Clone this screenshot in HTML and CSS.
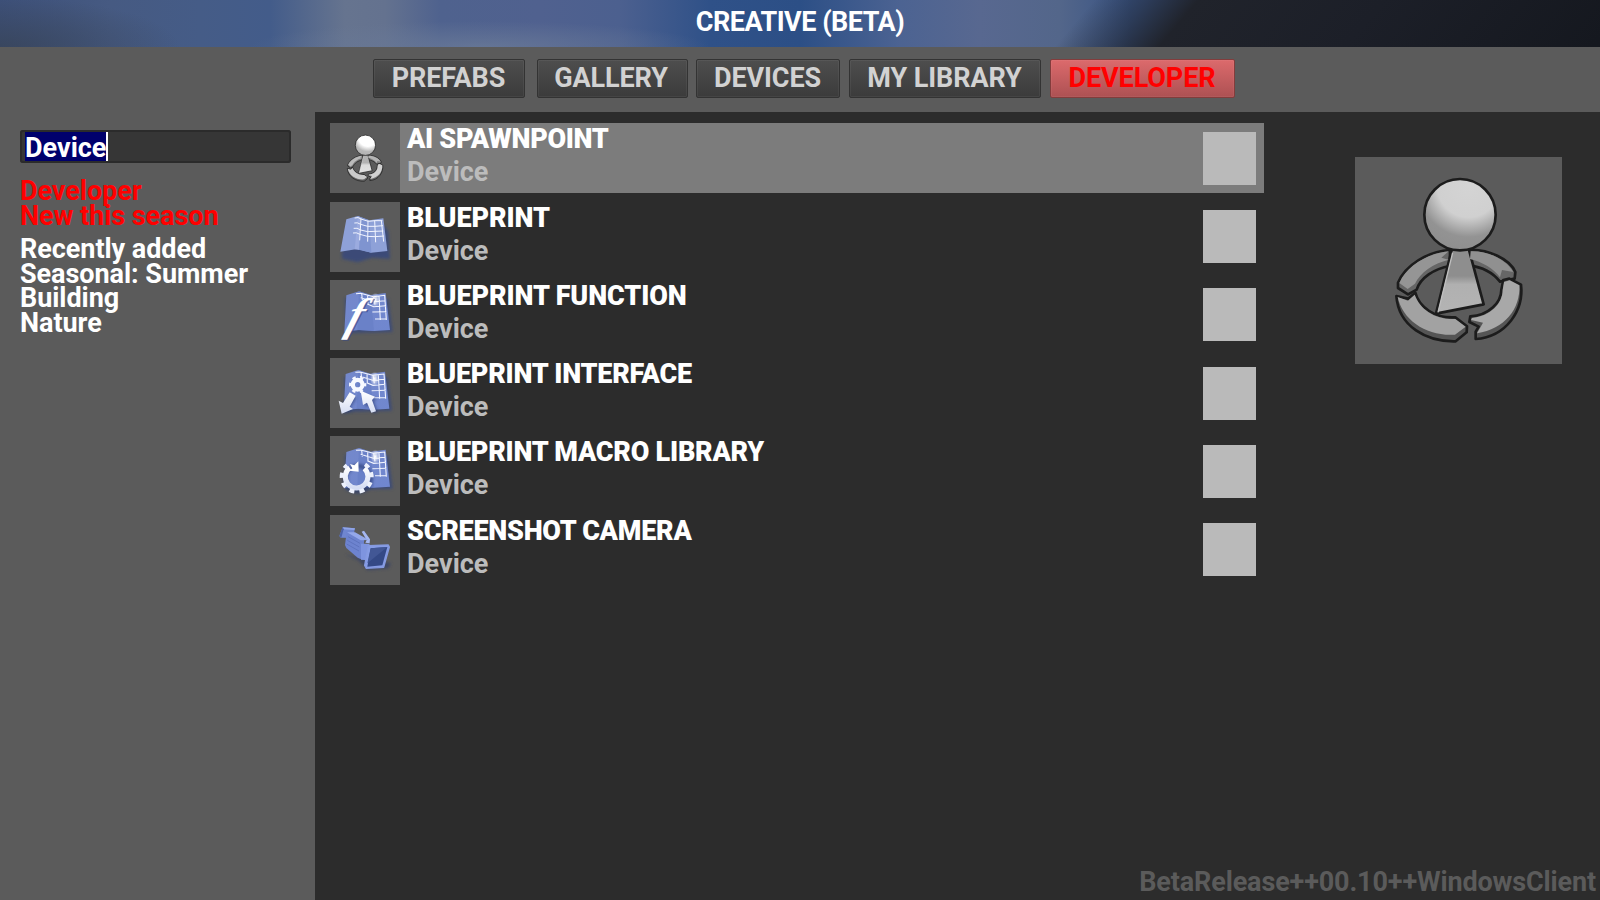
FILE: index.html
```html
<!DOCTYPE html>
<html lang="en">
<head>
<meta charset="utf-8">
<title>Creative (Beta)</title>
<link rel="stylesheet" href="styles.css">
</head>
<body>
<svg class="defs" width="0" height="0" aria-hidden="true">
  <defs>
    <radialGradient id="head" cx="0.62" cy="0.1" r="0.95">
      <stop offset="0" stop-color="#d4d4d4"/><stop offset="0.46" stop-color="#d0d0d0"/><stop offset="0.75" stop-color="#939393"/><stop offset="1" stop-color="#8e8e8e"/>
    </radialGradient>
    <linearGradient id="body" x1="0" y1="0" x2="0" y2="1">
      <stop offset="0" stop-color="#8e8e8e"/><stop offset="0.42" stop-color="#8e8e8e"/><stop offset="0.55" stop-color="#b0b0b0"/><stop offset="1" stop-color="#b4b4b4"/>
    </linearGradient>
    <linearGradient id="map" x1="0" y1="0" x2="1" y2="1">
      <stop offset="0" stop-color="#7488cb"/><stop offset="1" stop-color="#7087cf"/>
    </linearGradient>
    <linearGradient id="metal" x1="0" y1="0" x2="0" y2="1">
      <stop offset="0" stop-color="#ffffff"/><stop offset="1" stop-color="#d5ddf3"/>
    </linearGradient>
    <radialGradient id="glow"><stop offset="0" stop-color="#fff"/><stop offset="1" stop-color="#fff" stop-opacity="0"/></radialGradient>
    <filter id="soft" x="-30%" y="-30%" width="160%" height="160%"><feGaussianBlur stdDeviation="4"/></filter>
    <g id="pawn">
      <g stroke="#1c1c1c" stroke-width="8" stroke-linejoin="round">
        <path fill="#666" d="M330 330C262 334 196 376 174 428L174 444 204 463 230 449C241 414 282 386 330 378Z"/>
        <path fill="#666" d="M384 330C445 326 510 358 526 396L524 416 480 425C460 399 428 381 386 376Z"/>
        <path fill="#555" d="M169 468L204 476 226 458C236 500 284 536 346 532L381 559 380 577 347 604C260 606 176 560 169 468Z"/>
        <path fill="#555" d="M490 420L508 416 543 434C552 510 500 590 407 597L407 575 416 560 388 546 391 529C446 526 484 488 484 449Z"/>
        <path fill="url(#body)" d="M336 326L386 326 431 493 288 521Z"/>
        <circle cx="360" cy="224" r="107" fill="url(#head)"/>
      </g>
      <path fill="#959595" d="M326 334C262 340 200 378 178 429L203 447 225 431C240 398 280 370 326 359L304 353Z"/>
      <path fill="#909090" d="M392 334C446 332 500 360 520 396L486 390 480 412C460 384 426 366 390 357Z"/>
      <path fill="#a2a2a2" d="M173 471L204 482 224 464C240 508 286 540 346 537L377 560 345 584C262 590 188 542 173 471Z"/>
      <path fill="#a8a8a8" d="M492 426L509 421 538 436C542 506 494 568 411 580L429 548 393 540 396 534C452 528 488 490 488 450Z"/>
      <path fill="none" stroke="#c0c0c0" stroke-width="4" d="M338 338L294 517"/>
    </g>
    <g id="sheet">
      <path fill="#34477f" opacity=".75" filter="url(#soft)" d="M58 80L188 82 201 182 60 186Z"/>
      <path fill="url(#map)" d="M62 72L100 60 135 71 180 65 193 176 145 179 100 176 56 181Z"/>
      <path fill="#667dc4" opacity=".6" d="M100 60L135 71 145 179 95 176Z"/>
      <g fill="none" stroke="#f2f5ff" stroke-width="3.2">
        <path d="M91 67L105 66 143 76 178 72M105 79L143 91 179 88M125 98L144 106 181 103M140 122L182 121M148 143L182 143M108 66L110 86M126 71L127 98M144 75L148 100M160 74L164 146M177 71L182 146"/>
      </g>
      <ellipse cx="149" cy="86" rx="14" ry="22" fill="url(#glow)"/>
    </g>
  </defs>
</svg>

<header class="title-bar"><h1>CREATIVE (BETA)</h1></header>
<nav class="tabs">
  <button class="tab prefabs">PREFABS</button>
  <button class="tab gallery">GALLERY</button>
  <button class="tab devices">DEVICES</button>
  <button class="tab library">MY LIBRARY</button>
  <button class="tab developer">DEVELOPER</button>
</nav>
<div class="main">
  <aside class="sidebar">
    <div class="search"><span class="selected">Device</span></div>
    <ul class="cats featured"><li>Developer</li><li>New this season</li></ul>
    <ul class="cats"><li>Recently added</li><li>Seasonal: Summer</li><li>Building</li><li>Nature</li></ul>
  </aside>
  <section class="content">
    <div class="list">
      <div class="row active">
        <svg class="thumb bright" viewBox="-14 -11 739 739"><use href="#pawn"/></svg>
        <div class="info"><b class="tight">AI SPAWNPOINT</b><span>Device</span></div><i class="box"></i>
      </div>
      <div class="row">
        <svg class="thumb" viewBox="15 21 210 210">
          <path fill="#34477f" opacity=".8" filter="url(#soft)" d="M50 168L178 92 190 110 195 192 142 188 98 202 52 192Z"/>
          <path fill="#8ea1d8" d="M64 73L98 63 133 76 175 70 187 168 139 173 97 162 46 170Z"/>
          <path fill="#7f94d0" d="M98 63L133 76 139 173 91 162Z"/>
          <path fill="#9babdf" d="M98 63L107 68 102 164 89 163Z"/>
          <g fill="none" stroke="#f2f5ff" stroke-width="3">
            <path d="M89 69Q100 65 108 72L130 79 150 77 172 77M88 84Q97 81 107 88L128 94 150 94 174 92M86 100Q96 97 107 105L128 110 150 109 175 108M84 114Q94 111 105 118L127 124 150 125 177 123M108 70L104 136M129 76L128 140M149 77L152 142M169 77L176 140"/>
          </g>
        </svg>
        <div class="info"><b class="loose">BLUEPRINT</b><span>Device</span></div><i class="box"></i>
      </div>
      <div class="row">
        <svg class="thumb" viewBox="15 24 210 210">
          <use href="#sheet" y="-2" x="2"/>
          <text class="fn shade" transform="translate(62 176) skewX(-18)">f</text><text class="fn" transform="translate(58 173) skewX(-18)">f</text>
        </svg>
        <div class="info"><b class="loose">BLUEPRINT FUNCTION</b><span>Device</span></div><i class="box"></i>
      </div>
      <div class="row">
        <svg class="thumb" viewBox="15 24 210 210">
          <use href="#sheet"/>
          <path fill="#26396f" opacity=".6" filter="url(#soft)" d="M80 136L94 144 74 176 82 184 54 192 50 160ZM118 134L156 148 146 154 158 186 146 190 132 164 122 172Z"/>
          <path fill="url(#metal)" d="M74 127L92 137 74 170 84 177 50 191 41 152 54 159ZM107 122L150 140 141 150 153 184 139 188 126 158 114 165Z"/>
          <circle cx="98" cy="104" r="14.5" fill="none" stroke="#f7f9ff" stroke-width="13"/>
          <circle cx="98" cy="104" r="22" fill="none" stroke="#f5f7ff" stroke-width="8" stroke-dasharray="10 13.04" stroke-dashoffset="5"/>
        </svg>
        <div class="info"><b>BLUEPRINT INTERFACE</b><span>Device</span></div><i class="box"></i>
      </div>
      <div class="row">
        <svg class="thumb" viewBox="15 24 210 210">
          <use href="#sheet" x="2"/>
          <circle cx="99" cy="152" r="38" fill="none" stroke="#26396f" stroke-width="14" opacity=".6" filter="url(#soft)"/>
          <path fill="none" stroke="url(#metal)" stroke-width="15" d="M118 121A34 34 0 1 1 74 119"/>
          <path fill="none" stroke="#edf1fc" stroke-width="12" stroke-dasharray="15 15.2" d="M120 109A45 45 0 1 1 66 112"/>
          <path fill="#fff" d="M75 108L88 112 100 100 101 131 73 128 82 121Z"/>
        </svg>
        <div class="info"><b>BLUEPRINT MACRO LIBRARY</b><span>Device</span></div><i class="box"></i>
      </div>
      <div class="row">
        <svg class="thumb" viewBox="15 30 210 210">
          <path fill="#303c66" opacity=".7" filter="url(#soft)" d="M60 148L110 160 198 174 190 190 128 196 100 166Z"/>
          <path fill="#6f86d0" d="M53 67L90 70 84 99 47 98 43 93Z"/><path fill="#90a5e8" d="M53 67L90 70 88 75 56 73Z"/><path fill="#4c61a8" d="M43 93L49 98 56 73 53 67Z"/>
          <path fill="#a5b7f2" d="M110 80L117 77 135 103 134 115 121 113 125 105Z"/>
          <path fill="#6d83cf" d="M65 82L74 84 118 101 112 164 98 158 64 129 60 120Z"/>
          <path fill="#94a8ea" d="M66 82L90 82 132 105 107 106Z"/>
          <path fill="none" stroke="#566bb5" stroke-width="2" d="M69 95L105 115M67 106L103 126M65 117L102 138"/>
          <path fill="#7e94df" d="M108 116L134 116 127 166 108 164Z"/>
          <path fill="#869ce6" stroke="#859ae0" stroke-width="4" stroke-linejoin="round" d="M130 122L190 120 193 126 176 187 124 190 119 181Z"/>
          <path fill="#344986" d="M137 130L187 126 172 181 127 185Z"/>
          <path fill="#425795" d="M137 130L187 126 127 175Z"/>
        </svg>
        <div class="info"><b>SCREENSHOT CAMERA</b><span>Device</span></div><i class="box"></i>
      </div>
    </div>
    <div class="side">
      <svg class="preview" viewBox="45 51 621 621"><use href="#pawn"/></svg>
      <footer>BetaRelease++00.10++WindowsClient</footer>
    </div>
  </section>
</div>
</body>
</html>
```
FILE: styles.css
```css
* { box-sizing: border-box; }
body {
  margin: 0; width: 1600px; height: 900px; overflow: hidden;
  display: flex; flex-direction: column;
  background: #5b5b5b; color: #fff;
  font: bold 27px/25px Roboto, sans-serif;
}
.defs { position: absolute; }
.title-bar {
  height: 47px; flex: none; text-align: center;
  background:
    linear-gradient(130deg, transparent 838px, rgba(32,36,45,.5) 880px, #20232b 918px, #1c1f28 1060px, #15181f 1250px),
    radial-gradient(ellipse 180px 50px at 0 47px, rgba(56,68,88,.8), transparent),
    radial-gradient(ellipse 230px 26px at 480px 47px, rgba(106,122,152,.8), transparent),
    linear-gradient(90deg, #3d5079 0, #465a82 110px, #455c87 200px, #435c8a 270px, #66748f 345px, #64728f 385px, #4f628e 440px, #50618f 540px, #4c608f 620px, #2f5188 710px, #2c4f86 800px, #4c6392 900px, #586890 980px, #53668a 1060px, #385384 1130px);
}
.title-bar h1 { margin: 0; font: bold 27px/45px Roboto, sans-serif; letter-spacing: -.5px; }
.tabs { height: 65px; flex: none; display: flex; padding: 12px 0 0 373px; }
.tab {
  height: 39px; padding: 0 1px 1px 0; border: 1px solid #333; border-radius: 2px;
  background: linear-gradient(#4e4e4e, #3b3b3b); color: #d2d2d2;
  box-shadow: inset 0 0 0 1px rgba(255,255,255,.05);
  font: bold 27px/34px Roboto, sans-serif; letter-spacing: -.1px; white-space: nowrap;
}
.prefabs { width: 152px; margin-right: 12px; }
.gallery { width: 151px; margin-right: 8px; padding-right: 3px; }
.devices { width: 144px; margin-right: 9px; }
.library { width: 192px; margin-right: 9px; }
.developer {
  width: 185px; color: #f00; border-color: #833c3c;
  background: linear-gradient(#dc6a6c, #ad5153);
}
.main { flex: 1; display: flex; min-height: 0; }
.sidebar { flex: none; width: 315px; padding: 18px 24px 0 20px; }
.search {
  height: 33px; padding: 2px 5px; border-radius: 3px;
  background: #363636; box-shadow: inset 0 0 0 2px #2b2b2b;
}
.selected {
  display: inline-block; height: 29px; line-height: 33px;
  background: #00006c; border-right: 2px solid #fff;
}
.cats { list-style: none; margin: 0; padding: 0; line-height: 24.6px; letter-spacing: -.05px; white-space: nowrap; }
.featured { color: #f00; line-height: 25px; margin: 16px 0 8px; }
.content { flex: 1; min-width: 0; display: flex; background: #2c2c2c; }
.list { flex: none; width: 949px; padding: 11.3px 0 0 15px; display: flex; flex-direction: column; gap: 8.28px; }
.row { height: 70px; display: flex; align-items: center; padding-right: 8px; }
.active { background: #7c7c7c; }
.thumb { width: 70px; height: 70px; background: #5b5b5b; flex: none; }
.bright use { filter: brightness(1.25); }
.fn { font: italic bold 138px "Liberation Serif", serif; fill: #fff; letter-spacing: 0; }
.shade { fill: #33488c; opacity: .6; }
.info { flex: 1; height: 70px; padding-left: 7px; line-height: 33px; }
.info b, .info span { display: block; }
.info b { letter-spacing: -.24px; }
.info .loose { letter-spacing: -.1px; }
.info .tight { letter-spacing: -.32px; }
.info span { color: #bcbcbc; }
.box { width: 53px; height: 53px; background: #bababa; }
.side { flex: 1; min-width: 0; display: flex; flex-direction: column; justify-content: space-between; align-items: flex-end; padding-top: 45px; }
.preview { width: 207px; height: 207px; margin-right: 38px; background: #5b5b5b; }
footer { color: #5b5b5b; padding-right: 4px; height: 30px; letter-spacing: -.14px; white-space: nowrap; }
```
